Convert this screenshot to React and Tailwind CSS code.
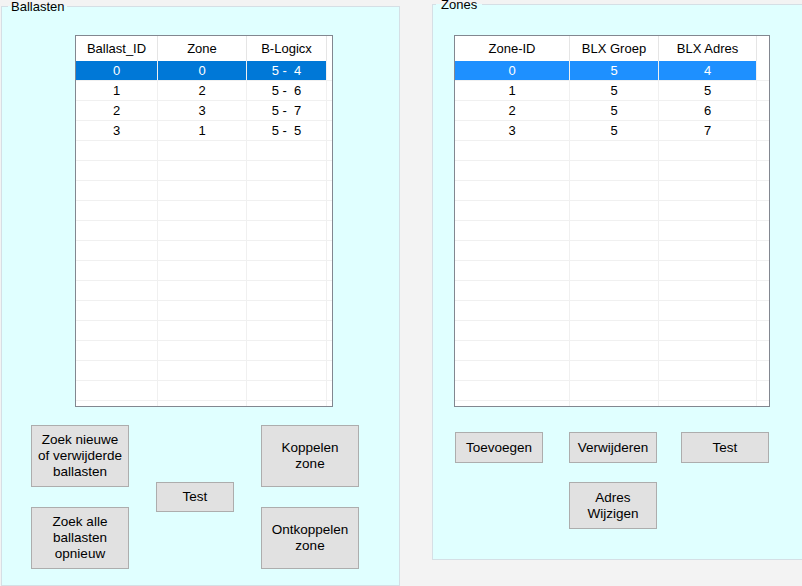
import React from 'react';

const ballastCols = [
  { label: 'Ballast_ID', w: 'w-[82px]' },
  { label: 'Zone', w: 'w-[89px]' },
  { label: 'B-Logicx', w: 'w-[80px]' },
];

const ballastRows = [
  ['0', '0', '5 -  4'],
  ['1', '2', '5 -  6'],
  ['2', '3', '5 -  7'],
  ['3', '1', '5 -  5'],
];

const zoneCols = [
  { label: 'Zone-ID', w: 'w-[115px]' },
  { label: 'BLX Groep', w: 'w-[89px]' },
  { label: 'BLX Adres', w: 'w-[98px]' },
];

const zoneRows = [
  ['0', '5', '4'],
  ['1', '5', '5'],
  ['2', '5', '6'],
  ['3', '5', '7'],
];

// grid zoals een WinForms DataGridView, lege rijen tot onderaan
function Grid({ cols, rows, selClass }) {
  const filled = [...rows];
  while (filled.length < 18) filled.push(cols.map(() => ''));

  return (
    <div className="border border-[#828790] bg-white h-[372px] overflow-hidden text-[13px] text-black">
      <div className="flex h-[25px]">
        {cols.map((c) => (
          <div key={c.label} className={`${c.w} shrink-0 border-r border-[#E5E5E5] flex items-center justify-center`}>
            {c.label}
          </div>
        ))}
        <div className="flex-1" />
      </div>
      {filled.map((r, i) => (
        <div key={i} className="flex h-[20px]">
          {r.map((v, j) => (
            <div
              key={j}
              className={`${cols[j].w} shrink-0 h-full border-r border-b border-[#F0F0F0] flex items-center justify-center whitespace-pre ${
                i === 0 ? `${selClass} text-white` : ''
              }`}
            >
              {v}
            </div>
          ))}
          <div className="flex-1 h-full border-b border-[#F0F0F0]" />
        </div>
      ))}
    </div>
  );
}

function Btn({ className, children }) {
  return (
    <button
      className={`${className} shrink-0 bg-[#E1E1E1] border border-[#ADADAD] text-[13.5px] leading-[16px] text-black flex items-center justify-center text-center`}
    >
      {children}
    </button>
  );
}

export default function App() {
  return (
    <div className="w-[802px] h-[586px] overflow-hidden bg-[#F3F3F3] flex items-start gap-[32px] font-['Liberation_Sans',Arial,sans-serif]">
      {/* Ballasten */}
      <fieldset className="ml-px w-[399px] h-[586px] shrink-0 border border-[#D5DFE5] bg-[#E0FFFF]">
        <legend className="ml-[6px] px-[3px] text-[13px] leading-[13px] text-black">Ballasten</legend>
        <div className="ml-[73px] mt-[22px] w-[258px]">
          <Grid cols={ballastCols} rows={ballastRows} selClass="bg-[#0078D7]" />
        </div>
        <div className="flex items-center ml-[29px] mt-[18px] gap-[27px]">
          <div className="flex flex-col gap-[20px]">
            <Btn className="w-[98px] h-[62px]">
              Zoek nieuwe<br />of verwijderde<br />ballasten
            </Btn>
            <Btn className="w-[98px] h-[62px]">
              Zoek alle<br />ballasten<br />opnieuw
            </Btn>
          </div>
          <Btn className="w-[78px] h-[30px]">Test</Btn>
          <div className="flex flex-col gap-[20px]">
            <Btn className="w-[98px] h-[62px]">
              Koppelen<br />zone
            </Btn>
            <Btn className="w-[98px] h-[62px]">
              Ontkoppelen<br />zone
            </Btn>
          </div>
        </div>
      </fieldset>

      {/* Zones */}
      <fieldset className="-mt-[2px] w-[380px] h-[562px] shrink-0 border border-[#D5DFE5] bg-[#E0FFFF]">
        <legend className="ml-[3px] px-[5px] text-[13px] leading-[13px] text-black">Zones</legend>
        <div className="ml-[21px] mt-[24px] w-[316px]">
          <Grid cols={zoneCols} rows={zoneRows} selClass="bg-[#1E90FF]" />
        </div>
        <div className="ml-[22px] mt-[25px] flex flex-col">
          <div className="flex items-center gap-[26px]">
            <Btn className="w-[88px] h-[31px]">Toevoegen</Btn>
            <Btn className="w-[88px] h-[31px]">Verwijderen</Btn>
            <Btn className="w-[88px] h-[31px] ml-[-2px]">Test</Btn>
          </div>
          <div className="flex ml-[114px] mt-[19px]">
            <Btn className="w-[88px] h-[47px]">
              Adres<br />Wijzigen
            </Btn>
          </div>
        </div>
      </fieldset>
    </div>
  );
}
